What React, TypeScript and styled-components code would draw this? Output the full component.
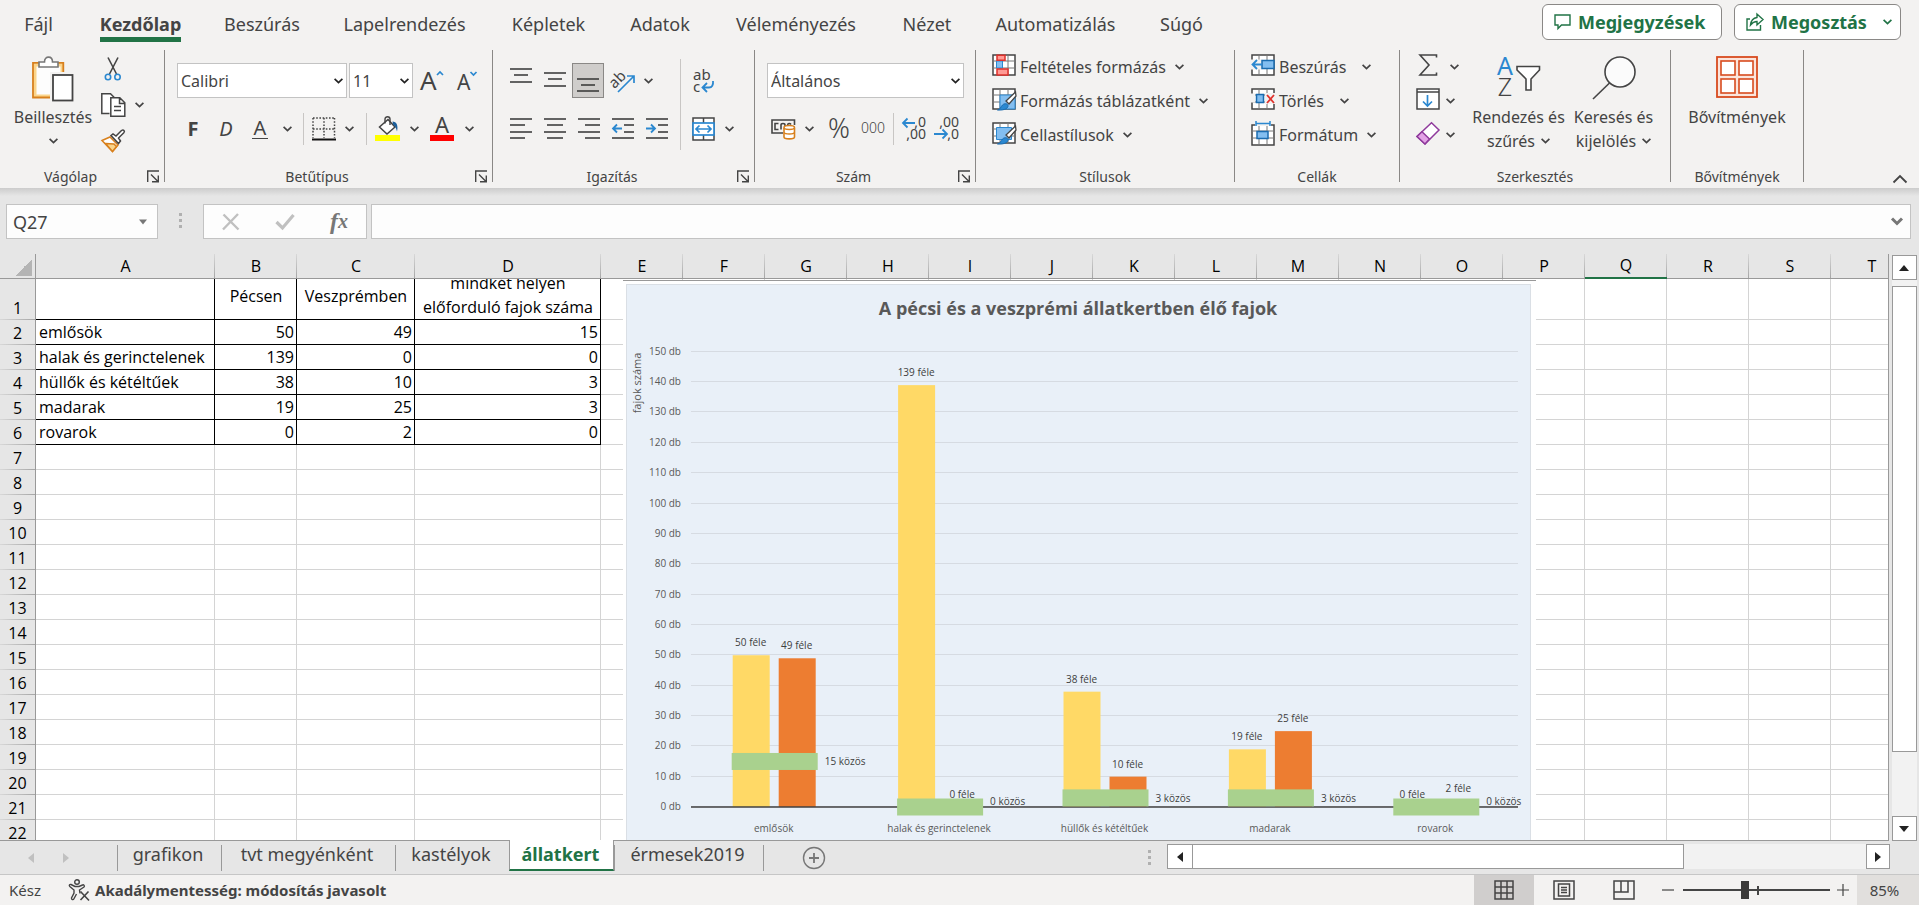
import React from 'react';
import styled, { createGlobalStyle, css } from 'styled-components';

const UI_FONT = "'Noto Sans', 'Open Sans', sans-serif";
const SHEET_FONT = "'Open Sans', 'Noto Sans', sans-serif";
const INK = '#444444';
const GREEN = '#217346';
const BLUE = '#2b88d0';

const GlobalStyle = createGlobalStyle`
  *, *::before, *::after { box-sizing: border-box; }
  body { margin: 0; background: #e6e6e6; font-family: ${UI_FONT}; color: ${INK}; }
  button, input, select { font: inherit; color: inherit; margin: 0; }
  button { border: 0; padding: 0; background: none; cursor: pointer; }
  svg { display: block; flex: none; overflow: visible; }
`;

/* ---------- window ---------- */

const Window = styled.div`
  display: flex;
  flex-direction: column;
  height: 100vh;
  overflow: hidden;
`;

const Ribbon = styled.header`
  background: #f3f2f1;
`;

const TabRow = styled.div`
  display: flex;
  align-items: flex-start;
  height: 50px;
`;

const TabList = styled.nav`
  display: flex;
  flex: 1;
`;

const Tab = styled.button<{ $w: number; $active?: boolean }>`
  width: ${p => p.$w}px;
  padding-top: 12px;
  font-size: 18px;
  line-height: 25px;
  font-weight: ${p => (p.$active ? 700 : 400)};
  white-space: nowrap;
  span {
    display: inline-block;
    border-bottom: 5px solid ${p => (p.$active ? GREEN : 'transparent')};
  }
`;

const ShareArea = styled.div`
  display: flex;
  gap: 12px;
  padding: 4px 18px 0 0;
`;

const ShareButton = styled.button<{ $w: number }>`
  display: flex;
  align-items: center;
  gap: 7px;
  width: ${p => p.$w}px;
  height: 36px;
  padding: 0 8px 0 11px;
  border: 1px solid #8a8886;
  border-radius: 6px;
  background: #ffffff;
  color: ${GREEN};
  font-size: 18px;
  line-height: 24px;
  font-weight: 700;
  span { flex: 1; text-align: left; }
`;

const Groups = styled.div`
  display: flex;
  height: 138px;
`;

const Group = styled.section<{ $w: number }>`
  display: flex;
  flex-direction: column;
  flex: none;
  width: ${p => p.$w}px;
`;

const Divider = styled.div`
  flex: none;
  width: 1px;
  height: 132px;
  background: #8a8886;
`;

const GroupBody = styled.div<{ $pad?: number }>`
  display: flex;
  height: 117px;
  padding-left: ${p => p.$pad ?? 0}px;
`;

const GroupFooter = styled.div`
  display: flex;
  height: 20px;
  font-size: 14px;
  line-height: 20px;
  span { flex: 1; text-align: center; }
`;

const Launcher = styled.button`
  width: 12px;
  height: 18px;
  margin: 0 5px 0 6px;
`;

const CollapseArea = styled.div`
  display: flex;
  flex: 1;
  align-items: flex-end;
  justify-content: flex-end;
  padding: 0 11px 4px 0;
`;

const ControlRows = styled.div`
  display: flex;
  flex-direction: column;
  gap: 11px;
  padding-top: 12px;
`;

const ControlRow = styled.div`
  display: flex;
  align-items: center;
  height: 37px;
`;

const IconButton = styled.button<{ $w: number; $pressed?: boolean }>`
  display: flex;
  flex: none;
  align-items: center;
  justify-content: center;
  width: ${p => p.$w}px;
  height: 35px;
  ${p =>
    p.$pressed &&
    css`
      background: #cfcdcb;
      outline: 1px solid #8a8886;
      outline-offset: -1px;
    `}
`;

const LetterButton = styled(IconButton)<{ $kind: 'bold' | 'italic' | 'underline' }>`
  font-size: 20px;
  line-height: 20px;
  font-weight: ${p => (p.$kind === 'bold' ? 700 : 400)};
  font-style: ${p => (p.$kind === 'italic' ? 'italic' : 'normal')};
  span {
    padding: 0 2px;
    border-bottom: ${p => (p.$kind === 'underline' ? `1px solid ${INK}` : '0')};
  }
`;

const Separator = styled.div<{ $tall?: boolean }>`
  flex: none;
  width: 1px;
  height: ${p => (p.$tall ? 91 : 32)}px;
  margin: ${p => (p.$tall ? '9px 6px 0' : '0 6px')};
  background: #c8c6c4;
`;

const SelectWrap = styled.div<{ $w: number }>`
  position: relative;
  width: ${p => p.$w}px;
  margin-right: 2px;
  svg {
    position: absolute;
    right: 4px;
    top: 15px;
    pointer-events: none;
  }
`;

const SelectBox = styled.select`
  display: block;
  appearance: none;
  width: 100%;
  height: 35px;
  padding: 0 20px 0 3px;
  border: 1px solid #c3c3c3;
  border-radius: 0;
  background: #ffffff;
  font-size: 16px;
`;

const LargeButton = styled.button<{ $w: number }>`
  display: flex;
  flex-direction: column;
  align-items: center;
  width: ${p => p.$w}px;
  height: 117px;
  padding-top: 6px;
  font-size: 16px;
  line-height: 24px;
  white-space: nowrap;
`;

const LargeIcon = styled.span`
  height: 49px;
`;

const LabelLine = styled.span`
  display: flex;
  align-items: center;
  gap: 6px;
  height: 24px;
`;

const Stack = styled.div<{ $w?: number }>`
  display: flex;
  flex-direction: column;
  width: ${p => (p.$w ? `${p.$w}px` : 'auto')};
`;

const CommandRow = styled.div<{ $gap?: number }>`
  display: flex;
  align-items: center;
  gap: ${p => p.$gap ?? 6}px;
  height: 34px;
`;

const Command = styled.button`
  display: flex;
  align-items: center;
  gap: 4px;
  font-size: 16px;
  line-height: 24px;
  white-space: nowrap;
  svg + svg { margin-left: 5px; }
`;

const ClipTools = styled.div`
  display: flex;
  flex-direction: column;
  padding-top: 1px;
`;

const ClipRow = styled.div`
  display: flex;
  align-items: center;
  gap: 9px;
  height: 36px;
`;

/* ---------- formula bar ---------- */

const FormulaBar = styled.div`
  display: flex;
  flex: none;
  align-items: flex-start;
  height: 66px;
  padding: 16px 8px 0 6px;
  background: linear-gradient(#cccccc, #e6e6e6 8px);
`;

const NameBox = styled.div`
  display: flex;
  align-items: center;
  width: 152px;
  height: 35px;
  padding-right: 10px;
  border: 1px solid #c3c3c3;
  background: #fdfdfd;
  input {
    flex: 1;
    min-width: 0;
    padding: 0 6px;
    border: 0;
    outline: 0;
    background: none;
    font-size: 18px;
  }
`;

const Grip = styled.div<{ $w: number }>`
  display: flex;
  flex-direction: column;
  align-items: center;
  justify-content: center;
  gap: 3px;
  width: ${p => p.$w}px;
  height: 33px;
  i {
    width: 3px;
    height: 3px;
    background: #b0b0b0;
  }
`;

const FormulaTools = styled.div`
  display: flex;
  align-items: center;
  width: 164px;
  height: 35px;
  margin-right: 4px;
  border: 1px solid #c3c3c3;
  background: #fdfdfd;
`;

const FxButton = styled(IconButton)`
  font-family: 'Liberation Serif', serif;
  font-size: 24px;
  font-style: italic;
  font-weight: 700;
  color: #777777;
  small { font-size: 20px; }
`;

const FormulaInput = styled.div`
  display: flex;
  flex: 1;
  align-items: center;
  height: 35px;
  padding-right: 7px;
  border: 1px solid #c3c3c3;
  background: #fdfdfd;
  input {
    flex: 1;
    min-width: 0;
    border: 0;
    outline: 0;
    background: none;
    font-size: 18px;
  }
`;

/* ---------- sheet ---------- */

const SheetArea = styled.main`
  display: flex;
  flex: 1;
  min-height: 0;
  background: #e6e6e6;
`;

const GridView = styled.div`
  position: relative;
  flex: 1;
  min-width: 0;
  overflow: hidden;
  background: linear-gradient(#e6e6e6 25px, #ffffff 25px);
  border-right: 1px solid #999999;
  border-bottom: 1px solid #999999;
`;

const GridTable = styled.table`
  width: 1px;
  table-layout: fixed;
  border-collapse: separate;
  border-spacing: 0;
  font-family: ${SHEET_FONT};
  font-size: 16px;
  line-height: 24px;
  color: #000000;
`;

const Col = styled.col<{ $w: number }>`
  width: ${p => p.$w}px;
`;

const ColumnHead = styled.th<{ $selected?: boolean }>`
  height: 25px;
  padding: 0;
  border-bottom: ${p => (p.$selected ? `2px solid ${GREEN}` : '1px solid #999999')};
  background: linear-gradient(#d8d8d8, #a6a6a6) right / 1px 100% no-repeat #e6e6e6;
  font-weight: 400;
  line-height: ${p => (p.$selected ? 23 : 24)}px;
`;

const Corner = styled.th`
  height: 25px;
  padding: 0;
  border-right: 1px solid #999999;
  border-bottom: 1px solid #999999;
  background: linear-gradient(135deg, transparent 50%, #b4b4b4 50%) 15px 5px / 17px 17px no-repeat #e6e6e6;
`;

const RowHead = styled.th`
  padding: 0;
  border-right: 1px solid #999999;
  background: linear-gradient(90deg, #d8d8d8, #a6a6a6) bottom / 100% 1px no-repeat #e6e6e6;
  font-weight: 400;
  vertical-align: bottom;
`;

const Cell = styled.td<{ $data?: boolean; $align?: string }>`
  height: 25px;
  padding: 0 2px 0 3px;
  border-right: 1px solid ${p => (p.$data ? '#000000' : '#d4d4d4')};
  border-bottom: 1px solid ${p => (p.$data ? '#000000' : '#d4d4d4')};
  text-align: ${p => p.$align ?? 'left'};
  white-space: nowrap;
`;

const HeadingText = styled.div<{ $bottom?: boolean }>`
  display: flex;
  align-items: ${p => (p.$bottom ? 'flex-end' : 'center')};
  justify-content: center;
  height: 40px;
  padding-bottom: ${p => (p.$bottom ? 0 : 6)}px;
  overflow: hidden;
`;

const ChartFrame = styled.figure`
  position: absolute;
  left: 623px;
  top: 26px;
  margin: 0;
  background: #ffffff;
  border-top: 1px solid #999999;
`;

const VScroll = styled.div`
  display: flex;
  flex: none;
  flex-direction: column;
  align-items: center;
  width: 30px;
  padding-top: 1px;
`;

const ScrollButton = styled.button<{ $w: number }>`
  display: flex;
  flex: none;
  align-items: center;
  justify-content: center;
  width: ${p => p.$w}px;
  height: 25px;
  border: 1px solid #999999;
  background: #ffffff;
`;

const VTrack = styled.div`
  display: flex;
  flex: 1;
  flex-direction: column;
  width: 25px;
  padding-top: 6px;
  background: #f2f2f2;
`;

const VThumb = styled.div`
  height: 88%;
  border: 1px solid #999999;
  background: #ffffff;
`;

/* ---------- sheet tabs ---------- */

const SheetTabs = styled.div`
  display: flex;
  flex: none;
  height: 33px;
  background: #e6e6e6;
`;

const TabStrip = styled.div`
  display: flex;
  flex: 1;
  margin-right: 2px;
`;

const NavArrows = styled.div`
  display: flex;
  align-items: center;
  justify-content: space-between;
  width: 117px;
  padding: 0 46px 0 26px;
`;

const SheetTab = styled.button<{ $w: number; $active?: boolean }>`
  position: relative;
  width: ${p => p.$w}px;
  height: 30px;
  padding: 0 2px 4px 0;
  font-size: 18px;
  line-height: 26px;
  white-space: nowrap;
  &::before {
    content: '';
    position: absolute;
    left: 0;
    top: 4px;
    height: 26px;
    border-left: 1px solid #999999;
  }
  ${p =>
    p.$active &&
    css`
      height: 31px;
      margin-top: -1px;
      border-right: 1px solid #999999;
      border-left: 1px solid #999999;
      border-bottom: 2px solid ${GREEN};
      padding-bottom: 2px;
      background: #ffffff;
      color: ${GREEN};
      font-weight: 700;
      &::before { display: none; }
    `}
`;

const TabEnd = styled.div`
  width: 1px;
  height: 26px;
  margin-top: 4px;
  background: #999999;
`;

const AddSheet = styled.button`
  display: flex;
  align-items: center;
  justify-content: center;
  width: 100px;
`;

const HScroll = styled.div`
  display: flex;
  width: 723px;
  padding-top: 3px;
`;

const HTrack = styled.div`
  flex: 1;
  height: 25px;
  background: #f2f2f2;
`;

const HThumb = styled.div`
  width: 73%;
  height: 25px;
  border: 1px solid #999999;
  border-left: 0;
  background: #ffffff;
`;

const ScrollEnd = styled.div`
  width: 29px;
`;

/* ---------- status bar ---------- */

const StatusBar = styled.footer`
  display: flex;
  flex: none;
  align-items: center;
  height: 31px;
  border-top: 1px solid #c6c6c6;
  background: #f3f2f1;
  font-size: 15px;
`;

const StatusText = styled.span`
  width: 59px;
  padding-left: 9px;
`;

const AccessibilityStatus = styled.button`
  display: flex;
  flex: 1;
  align-items: center;
  gap: 5px;
  padding-left: 9px;
  font-weight: 700;
`;

const ViewButton = styled.button<{ $active?: boolean }>`
  display: flex;
  align-items: center;
  justify-content: center;
  width: 60px;
  height: 30px;
  background: ${p => (p.$active ? '#d0cecd' : 'transparent')};
`;

const ZoomArea = styled.div`
  display: flex;
  align-items: center;
  width: 203px;
  padding-left: 8px;
`;

const ZoomTrack = styled.div`
  position: relative;
  width: 147px;
  margin: 0 7px 0 9px;
  &::after {
    content: '';
    position: absolute;
    left: 50%;
    top: 5px;
    width: 2px;
    height: 9px;
    background: ${INK};
  }
`;

const ZoomRange = styled.input`
  display: block;
  appearance: none;
  width: 100%;
  height: 19px;
  background: linear-gradient(${INK}, ${INK}) center / 100% 2px no-repeat;
  &::-webkit-slider-thumb {
    appearance: none;
    width: 8px;
    height: 18px;
    background: #3b3a39;
  }
`;

const ZoomValue = styled.button`
  width: 62px;
  height: 30px;
  padding-right: 7px;
  background: #e1dfdd;
`;

/* ---------- icons ---------- */

const Chevron = ({ color = INK }: { color?: string }) => (
  <svg width="9" height="6" viewBox="0 0 9 6" fill="none" stroke={color} strokeWidth="1.7">
    <path d="M.6.8 4.5 4.6 8.4.8" />
  </svg>
);

const LauncherIcon = () => (
  <svg width="12" height="13" viewBox="0 0 12 13" fill="none" stroke={INK} strokeWidth="1.4">
    <path d="M.7 12V1H12M4 4.5l7 7M11.3 5.5v6.3H5" />
  </svg>
);

const PasteIcon = () => (
  <svg width="42" height="46" viewBox="0 0 42 46" fill="none">
    <rect x="3" y="9" width="27" height="31" fill="#fdfdfd" stroke="#fbd58b" strokeWidth="3" />
    <path d="M31.3 17V6.8H1V41.5H20" stroke="#d8801d" strokeWidth="1.8" />
    <path d="M7 11V6h5.5c0-6.5 8-6.5 8 0H26v5z" fill="#fff" stroke="#777" strokeWidth="1.6" />
    <rect x="18" y="16" width="24" height="30" fill="#f3f2f1" />
    <rect x="21" y="19" width="19.5" height="25.5" fill="#fff" stroke={INK} strokeWidth="1.8" />
  </svg>
);

const CutIcon = () => (
  <svg width="24" height="24" viewBox="0 0 24 24" fill="none" strokeWidth="1.6">
    <path d="M7 .5 15.5 17M17 .5 8.5 17" stroke={INK} />
    <circle cx="7" cy="20" r="2.7" stroke={BLUE} />
    <circle cx="16.5" cy="20" r="2.7" stroke={BLUE} />
  </svg>
);

const CopyIcon = () => (
  <svg width="25" height="24" viewBox="0 0 25 24" fill="#fff" stroke={INK} strokeWidth="1.5">
    <path d="M8.5 20.5H.8V.8h8.7l4 4" />
    <path d="M9.8 4.8h9l5 5v13.4h-14zM18.5 5v5.5H24M13 13.5h7M13 17.5h7" />
  </svg>
);

const BrushIcon = () => (
  <svg width="24" height="24" viewBox="0 0 24 24" fill="none" strokeWidth="1.5">
    <path d="M1 11.5 9 8l8 8-5.5 6.5z" fill="#fff" stroke="#d8801d" />
    <path d="M4.5 14.5 13 15l2.5 2.5-4 5z" fill="#fbd58b" stroke="#d8801d" />
    <path d="m10 6.5 2-1.5 3 2 5.5-5.5c2-1.5 3.8.5 2.3 2.3L17.500 9l2 3-2 2.500z" fill="#fff" stroke={INK} />
  </svg>
);

const FontSizeIcon = ({ grow }: { grow?: boolean }) => (
  <svg width="26" height="26" viewBox="0 0 26 26">
    <text x={grow ? 1 : 4} y="22" fontFamily={UI_FONT} fontSize={grow ? 26 : 21} fill={INK}>A</text>
    <path d={grow ? 'M18 7 21 4l3 3' : 'M17.5 4 20.5 7l3-3'} fill="none" stroke={BLUE} strokeWidth="1.7" />
  </svg>
);

const BorderIcon = () => (
  <svg width="24" height="24" viewBox="0 0 24 24" fill="none" stroke={INK} strokeWidth="1.5">
    <path d="M1 1h22M1 12h22M1 1v20M12 1v20M22.5 1v20" strokeDasharray="1.6 1.6" />
    <path d="M0 22.5h24" stroke="#111" strokeWidth="2" />
  </svg>
);

const FillIcon = () => (
  <svg width="25" height="26" viewBox="0 0 25 26" fill="none">
    <path d="M13 3.5 20 11l-8 7-7.5-7z" fill="#fff" stroke={INK} strokeWidth="1.5" />
    <path d="M10 7.5V3c0-3 5-3 5 0v6" stroke={INK} strokeWidth="1.4" />
    <path d="M17.5 5.5c4 0 6 4 4.5 10-1-4-2-5.5-4-7z" fill="#1b5f9c" />
    <rect y="19" width="25" height="6" fill="#ffff00" />
  </svg>
);

const FontColorIcon = () => (
  <svg width="24" height="26" viewBox="0 0 24 26">
    <text x="12" y="17" textAnchor="middle" fontFamily={UI_FONT} fontSize="22" fill={INK}>A</text>
    <rect y="19" width="24" height="6" fill="#ff0000" />
  </svg>
);

const LinesIcon = ({ lines, h = 22 }: { lines: [number, number, number][]; h?: number }) => (
  <svg width="22" height={h} viewBox={`0 0 22 ${h}`} stroke="#333" strokeWidth="1.5">
    {lines.map(([x1, x2, y]) => (
      <path key={y} d={`M${x1} ${y}H${x2}`} />
    ))}
  </svg>
);

const IndentIcon = ({ outdent }: { outdent?: boolean }) => (
  <svg width="22" height="22" viewBox="0 0 22 22" fill="none" stroke="#333" strokeWidth="1.5">
    <path d="M0 1h22M12 7h10M12 14h10M0 20h22" />
    <path
      d={outdent ? 'M10 10.5H1M5 6.5l-4 4 4 4' : 'M0 10.5h9M5 6.5l4 4-4 4'}
      stroke={BLUE}
      strokeWidth="1.8"
    />
  </svg>
);

const OrientationIcon = () => (
  <svg width="26" height="26" viewBox="0 0 26 26">
    <text x="2" y="19" transform="rotate(-45 6 17)" fontFamily={UI_FONT} fontSize="15" fill={INK}>ab</text>
    <path d="M8 24 24 8M17 8h7v7" fill="none" stroke={BLUE} strokeWidth="1.7" />
  </svg>
);

const WrapIcon = () => (
  <svg width="22" height="26" viewBox="0 0 22 26">
    <text x="0" y="12" fontFamily={UI_FONT} fontSize="15" fill={INK}>ab</text>
    <text x="0" y="24" fontFamily={UI_FONT} fontSize="15" fill={INK}>c</text>
    <path d="M20 13c.5 4-1 6.5-4 6.5H9.5M14 15l-4.5 4.5L14 24" fill="none" stroke={BLUE} strokeWidth="1.8" />
  </svg>
);

const MergeIcon = () => (
  <svg width="23" height="24" viewBox="0 0 23 24" fill="none">
    <path d="M1 1h21v22H1zM11.5 1v22" fill="#fff" stroke={INK} strokeWidth="1.5" />
    <rect x="1" y="6" width="21" height="12" fill="#fff" stroke={BLUE} strokeWidth="1.7" />
    <path d="M4 12h15M7.5 8.5 4 12l3.5 3.5M15.5 8.5 19 12l-3.5 3.5" stroke={BLUE} strokeWidth="1.7" />
  </svg>
);

const CurrencyIcon = () => (
  <svg width="25" height="22" viewBox="0 0 25 22" fill="none">
    <path d="M12 15H1V2h22.5v5" stroke={INK} strokeWidth="1.6" />
    <path d="M7.5 5.5H4v6h3.5M14 8V7c0-2-4-2-4 0v4.5M20 6.5c-1-1.5-3-1.5-3.5.5" stroke={INK} strokeWidth="1.6" />
    <path d="M13 10v9c0 2.5 10.5 2.5 10.5 0v-9" fill="#fff" stroke="#d8801d" strokeWidth="1.6" />
    <ellipse cx="18.25" cy="9.5" rx="5.25" ry="2" fill="#fff" stroke="#d8801d" strokeWidth="1.6" />
    <path d="M13 14.5c1 2 9.5 2 10.5 0" stroke="#d8801d" strokeWidth="1.6" />
  </svg>
);

const PercentIcon = () => (
  <svg width="26" height="26" viewBox="0 0 26 26">
    <text x="13" y="22" textAnchor="middle" fontFamily={UI_FONT} fontSize="27" fontWeight="300" fill={INK}>%</text>
  </svg>
);

const ThousandsIcon = () => (
  <svg width="28" height="22" viewBox="0 0 28 22">
    <text x="14" y="15" textAnchor="middle" fontFamily={UI_FONT} fontSize="14" fontWeight="300" fill={INK}>000</text>
  </svg>
);

const DecimalIcon = ({ more }: { more?: boolean }) => (
  <svg width="26" height="26" viewBox="0 0 26 26" fontFamily={UI_FONT} fontSize="14" fill={INK}>
    <text x="25" y="11" textAnchor="end">{more ? ',0' : ',00'}</text>
    <text x="25" y="23" textAnchor="end">{more ? ',00' : ',0'}</text>
    <path
      d={more ? 'M14 7H2M6.5 2.5 2 7 6.5 11.5' : 'M0 18h13M8.5 13.5 13 18l-4.5 4.5'}
      fill="none"
      stroke={BLUE}
      strokeWidth="1.8"
    />
  </svg>
);

const Grid = () => (
  <>
    <rect x="1" y="1" width="22" height="20" fill="#fff" stroke={INK} strokeWidth="1.5" />
    <path d="M8 1v20M16 1v20M1 7h22M1 14h22" stroke="#777" strokeWidth="1" />
  </>
);

const ConditionalIcon = () => (
  <svg width="24" height="26" viewBox="0 0 24 26" fill="none">
    <Grid />
    <path d="M4.5 7h6v7h-6z" fill="#83bef0" stroke={BLUE} />
    <path d="M5 1.2h8v5H5zM5 15h11v6H5z" fill="#ff9a94" stroke="#e0322c" strokeWidth="1.5" />
  </svg>
);

const PaintBrush = () => (
  <>
    <path d="M23.5 4 14 13l3 3 7-8z" fill="#fff" stroke={INK} strokeWidth="1.3" />
    <path d="M5.5 22c3-.5 3-3 5-5s5-1.5 5.5.5c.5 2.5-3 5-10.5 4.5z" fill="#2b88d0" stroke="#1b6cb0" />
  </>
);

const TableFormatIcon = () => (
  <svg width="24" height="26" viewBox="0 0 24 26" fill="none">
    <Grid />
    <path d="M8 7h15v14H8z" fill="#83bef0" stroke={BLUE} />
    <PaintBrush />
  </svg>
);

const CellStyleIcon = () => (
  <svg width="24" height="26" viewBox="0 0 24 26" fill="none">
    <Grid />
    <path d="M4.5 5.5h15v12h-15z" fill="#83bef0" stroke={BLUE} />
    <PaintBrush />
  </svg>
);

const InsertIcon = () => (
  <svg width="24" height="26" viewBox="0 0 24 26" fill="none">
    <Grid />
    <path d="M0 5.5h12v10H0z" fill="#f3f2f1" />
    <path d="M11 6.5h12v8H11z" fill="#83bef0" stroke="#1b6cb0" strokeWidth="1.5" />
    <path d="M11 10.5H1.5M6 6l-4.5 4.5L6 15" stroke={BLUE} strokeWidth="1.8" />
  </svg>
);

const DeleteIcon = () => (
  <svg width="24" height="26" viewBox="0 0 24 26" fill="none">
    <Grid />
    <path d="M14 5h10v11H14zM0 5.5h4v9H0z" fill="#f3f2f1" />
    <path d="M5.5 6.5h7v8h-7z" fill="#83bef0" stroke="#1b6cb0" strokeWidth="1.5" />
    <path d="m16 7 7 8M23 7l-7 8" stroke="#e0322c" strokeWidth="1.8" />
  </svg>
);

const FormatIcon = () => (
  <svg width="24" height="28" viewBox="0 0 24 28" fill="none">
    <g transform="translate(0 3)">
      <Grid />
      <path d="M6 7.5h11v7H6z" fill="#83bef0" stroke="#1b6cb0" strokeWidth="1.5" />
    </g>
    <path d="M4 0h16v5H4z" fill="#f3f2f1" />
    <path d="M5 2.5h14M5 0v5M19 0v5" stroke={BLUE} strokeWidth="1.5" />
  </svg>
);

const SumIcon = () => (
  <svg width="24" height="26" viewBox="0 0 24 26" fill="none" stroke={INK} strokeWidth="1.6">
    <path d="M20.5 3.5V1H4l9 10-9 10h16.5v-2.5" />
  </svg>
);

const FillDownIcon = () => (
  <svg width="24" height="26" viewBox="0 0 24 26" fill="none">
    <path d="M1 1h22v20H1z" fill="#fff" stroke={INK} strokeWidth="1.5" />
    <path d="M1 4h22" stroke={INK} strokeWidth="1.5" />
    <path d="M11.5 7v11M7 13.5l4.5 4.5 4.5-4.5" stroke={BLUE} strokeWidth="1.7" />
  </svg>
);

const EraserIcon = () => (
  <svg width="24" height="26" viewBox="0 0 24 26" fill="none" stroke="#8f3a9c" strokeWidth="1.5">
    <path d="M15.5.8 23 8 9 22 1 14.5z" fill="#fff" />
    <path d="M6 9.8 13.5 17 9 22 1 14.5z" fill="#e3a3e6" />
  </svg>
);

const SortIcon = () => (
  <svg width="44" height="42" viewBox="0 0 44 42" fontFamily={UI_FONT} fontSize="25">
    <text x="8" y="19" textAnchor="middle" fill={BLUE}>A</text>
    <text x="8" y="40" textAnchor="middle" fontWeight="300" fill={INK}>Z</text>
    <path d="M20 10.5h22.5V14L34 23v11h-5V23l-9-9z" fill="#fff" stroke={INK} strokeWidth="1.6" />
  </svg>
);

const FindIcon = () => (
  <svg width="44" height="44" viewBox="0 0 44 44" fill="none" stroke={INK} strokeWidth="1.6">
    <circle cx="28" cy="16" r="15" fill="#fbfbfb" />
    <path d="M17.5 27 1 43" />
  </svg>
);

const AddinsIcon = () => (
  <svg width="42" height="42" viewBox="0 0 42 42" fill="#fff">
    <rect x="1" y="1" width="40" height="40" fill="#fbe5dc" stroke="#d84b1f" strokeWidth="1.8" />
    {[5, 23].map(x =>
      [5, 23].map(y => (
        <rect key={`${x}${y}`} x={x} y={y} width="14" height="14" stroke="#d84b1f" strokeWidth="1.6" />
      )),
    )}
  </svg>
);

const CommentIcon = () => (
  <svg width="17" height="18" viewBox="0 0 17 18" fill="none" stroke={GREEN} strokeWidth="1.4">
    <path d="M1 2h15v10H7.5L4 15.5V12H1z" />
  </svg>
);

const ShareIcon = () => (
  <svg width="18" height="20" viewBox="0 0 18 20" fill="none" stroke={GREEN} strokeWidth="1.4">
    <path d="M4 7H1v11h13.5v-5" />
    <path d="M11 2v3.5C7 6 5 8.5 4.5 13 6.5 10.5 8 9.5 11 9.5V13l6-5.5z" />
  </svg>
);

const CollapseIcon = () => (
  <svg width="16" height="10" viewBox="0 0 16 10" fill="none" stroke={INK} strokeWidth="1.8">
    <path d="m1.5 8.5 6.5-6.5 6.5 6.5" />
  </svg>
);

const TRIANGLES = {
  up: 'M0 8 5 2l5 6z',
  down: 'M0 2l5 6 5-6z',
  left: 'M8 0 2 5l6 5z',
  right: 'M2 0l6 5-6 5z',
};

const Triangle = ({ dir, color = '#222', size = 10 }: { dir: keyof typeof TRIANGLES; color?: string; size?: number }) => (
  <svg width={size} height={size} viewBox="0 0 10 10" fill={color}>
    <path d={TRIANGLES[dir]} />
  </svg>
);

const AccessibilityIcon = () => (
  <svg width="22" height="22" viewBox="0 0 22 22" fill="none" stroke={INK} strokeWidth="1.4">
    <circle cx="9" cy="3" r="2.3" />
    <path d="M12 14.5 11.5 11l4.5-3c1-1-.3-2.6-1.5-2L11 7.500H7L3 5.500c-1.300-.5-2.300 1-1.200 2L6 11v3l-2.500 5c-.3 1.500 1.700 2.200 2.300 1l2.700-5" />
    <path d="m12.5 12.5 8.500 9M20.500 12.500l-8 8.500" strokeWidth="1.6" />
  </svg>
);

/* ---------- data ---------- */

const RIBBON_TABS: [string, number][] = [
  ['Fájl', 77],
  ['Kezdőlap', 127],
  ['Beszúrás', 116],
  ['Lapelrendezés', 169],
  ['Képletek', 119],
  ['Adatok', 104],
  ['Véleményezés', 168],
  ['Nézet', 94],
  ['Automatizálás', 163],
  ['Súgó', 89],
];

const COLUMNS: [string, number][] = [
  ['A', 179], ['B', 82], ['C', 118], ['D', 186],
  ...'EFGHIJKLMNOPQRST'.split('').map(letter => [letter, 82] as [string, number]),
];

const SPECIES = [
  { name: 'emlősök', pecs: 50, veszprem: 49, both: 15 },
  { name: 'halak és gerinctelenek', pecs: 139, veszprem: 0, both: 0 },
  { name: 'hüllők és kétéltűek', pecs: 38, veszprem: 10, both: 3 },
  { name: 'madarak', pecs: 19, veszprem: 25, both: 3 },
  { name: 'rovarok', pecs: 0, veszprem: 2, both: 0 },
];

const SHEETS: [string, number][] = [
  ['grafikon', 104],
  ['tvt megyénként', 174],
  ['kastélyok', 114],
  ['állatkert', 105],
  ['érmesek2019', 149],
];

/* ---------- chart ---------- */

const CHART = { left: 68, right: 895, zero: 526, step: 30.35, bar: 37 };

const Chart = () => {
  const category = (CHART.right - CHART.left) / SPECIES.length;
  const yOf = (v: number) => CHART.zero - (v / 10) * CHART.step;
  const ticks = Array.from({ length: 16 }, (_, i) => i * 10);
  return (
    <ChartFrame>
      <svg width="913" height="580" viewBox="0 0 913 580" fontFamily={SHEET_FONT} fontSize="10" fill="#404040">
        <rect x="3.5" y="3.5" width="904" height="590" fill="#e9f0f8" stroke="#dadfe5" />
        <text x="455" y="34" textAnchor="middle" fontSize="18" fontWeight="700" fill="#595959">
          A pécsi és a veszprémi állatkertben élő fajok
        </text>
        <text transform="translate(18 102) rotate(-90)" textAnchor="middle" fontSize="11" fill="#595959">
          fajok száma
        </text>
        {ticks.map(v => (
          <g key={v}>
            <path d={`M${CHART.left} ${Math.round(yOf(v)) - 0.5}H${CHART.right}`} stroke="#d6dbe2" />
            <text x="58" y={yOf(v) + 3} textAnchor="end" fill="#595959">{v} db</text>
          </g>
        ))}
        {SPECIES.map((s, i) => {
          const mid = CHART.left + category * (i + 0.5);
          return (
            <g key={s.name}>
              <rect x={mid - 41} y={yOf(s.pecs)} width={CHART.bar} height={CHART.zero - yOf(s.pecs)} fill="#ffd966" />
              <rect x={mid + 5} y={yOf(s.veszprem)} width={CHART.bar} height={CHART.zero - yOf(s.veszprem)} fill="#ed7d31" />
            </g>
          );
        })}
        <path d={`M${CHART.left} ${CHART.zero}H${CHART.right}`} stroke="#404040" strokeWidth="1.5" />
        {SPECIES.map((s, i) => {
          const mid = CHART.left + category * (i + 0.5);
          return (
            <g key={s.name} textAnchor="middle">
              <rect x={mid - 42} y={yOf(s.both) - 8.5} width="86" height="17" fill="#a9d18e" />
              <text x={mid - 23} y={yOf(s.pecs) - 9}>{s.pecs} féle</text>
              <text x={mid + 23} y={yOf(s.veszprem) - 9}>{s.veszprem} féle</text>
              <text x={mid + 51} y={yOf(s.both) + (s.both ? 4 : -2)} textAnchor="start">{s.both} közös</text>
              <text x={mid} y="551" fill="#595959">{s.name}</text>
            </g>
          );
        })}
      </svg>
    </ChartFrame>
  );
};

/* ---------- sections ---------- */

const Footer = ({ label, launcher }: { label: string; launcher?: boolean }) => (
  <GroupFooter>
    <span>{label}</span>
    {launcher && (
      <Launcher aria-label={`${label} beállításai`}>
        <LauncherIcon />
      </Launcher>
    )}
  </GroupFooter>
);

const Drop = ({ w, label }: { w: number; label: string }) => (
  <IconButton $w={w} aria-label={label}>
    <Chevron />
  </IconButton>
);

const Picker = ({ w, label, value }: { w: number; label: string; value: string }) => (
  <SelectWrap $w={w}>
    <SelectBox aria-label={label} defaultValue={value}>
      <option>{value}</option>
    </SelectBox>
    <Chevron color="#222" />
  </SelectWrap>
);

const RibbonGroups = () => (
  <Groups>
    <Group $w={164}>
      <GroupBody $pad={5}>
        <LargeButton $w={96}>
          <LargeIcon><PasteIcon /></LargeIcon>
          <LabelLine>Beillesztés</LabelLine>
          <LabelLine><Chevron /></LabelLine>
        </LargeButton>
        <ClipTools>
          <ClipRow><button aria-label="Kivágás"><CutIcon /></button></ClipRow>
          <ClipRow>
            <button aria-label="Másolás"><CopyIcon /></button>
            <button aria-label="Másolási lehetőségek"><Chevron /></button>
          </ClipRow>
          <ClipRow><button aria-label="Formátummásoló"><BrushIcon /></button></ClipRow>
        </ClipTools>
      </GroupBody>
      <Footer label="Vágólap" launcher />
    </Group>
    <Divider />
    <Group $w={327}>
      <GroupBody $pad={12}>
        <ControlRows>
          <ControlRow>
            <Picker w={170} label="Betűtípus" value="Calibri" />
            <Picker w={64} label="Betűméret" value="11" />
            <IconButton $w={34} aria-label="Betűméret növelése"><FontSizeIcon grow /></IconButton>
            <IconButton $w={34} aria-label="Betűméret csökkentése"><FontSizeIcon /></IconButton>
          </ControlRow>
          <ControlRow>
            <LetterButton $w={32} $kind="bold"><span>F</span></LetterButton>
            <LetterButton $w={34} $kind="italic"><span>D</span></LetterButton>
            <LetterButton $w={34} $kind="underline"><span>A</span></LetterButton>
            <Drop w={20} label="Aláhúzás típusa" />
            <Separator />
            <IconButton $w={28} aria-label="Szegélyek"><BorderIcon /></IconButton>
            <Drop w={22} label="Szegély típusa" />
            <Separator />
            <IconButton $w={28} aria-label="Kitöltőszín"><FillIcon /></IconButton>
            <Drop w={26} label="Kitöltőszín választása" />
            <IconButton $w={30} aria-label="Betűszín"><FontColorIcon /></IconButton>
            <Drop w={24} label="Betűszín választása" />
          </ControlRow>
        </ControlRows>
      </GroupBody>
      <Footer label="Betűtípus" launcher />
    </Group>
    <Divider />
    <Group $w={261}>
      <GroupBody $pad={11}>
        <ControlRows>
          <ControlRow>
            <IconButton $w={34} aria-label="Felülre igazítás">
              <LinesIcon h={26} lines={[[0, 22, 1], [4, 18, 7], [0, 22, 14]]} />
            </IconButton>
            <IconButton $w={34} aria-label="Középre igazítás függőlegesen">
              <LinesIcon lines={[[0, 22, 3], [4, 18, 9], [0, 22, 16]]} />
            </IconButton>
            <IconButton $w={32} $pressed aria-label="Alulra igazítás">
              <LinesIcon lines={[[0, 22, 9], [4, 18, 15], [0, 22, 21]]} />
            </IconButton>
            <IconButton $w={38} aria-label="Tájolás"><OrientationIcon /></IconButton>
            <Drop w={12} label="Tájolás választása" />
          </ControlRow>
          <ControlRow>
            <IconButton $w={34} aria-label="Balra igazítás">
              <LinesIcon lines={[[0, 22, 1], [0, 15, 7], [0, 22, 14], [0, 15, 20]]} />
            </IconButton>
            <IconButton $w={34} aria-label="Középre igazítás">
              <LinesIcon lines={[[0, 22, 1], [3, 19, 7], [0, 22, 14], [3, 19, 20]]} />
            </IconButton>
            <IconButton $w={34} aria-label="Jobbra igazítás">
              <LinesIcon lines={[[0, 22, 1], [7, 22, 7], [0, 22, 14], [7, 22, 20]]} />
            </IconButton>
            <IconButton $w={34} aria-label="Behúzás csökkentése"><IndentIcon outdent /></IconButton>
            <IconButton $w={34} aria-label="Behúzás növelése"><IndentIcon /></IconButton>
          </ControlRow>
        </ControlRows>
        <Separator $tall />
        <ControlRows>
          <ControlRow>
            <IconButton $w={34} aria-label="Sortöréssel több sorba"><WrapIcon /></IconButton>
          </ControlRow>
          <ControlRow>
            <IconButton $w={32} aria-label="Cellaegyesítés"><MergeIcon /></IconButton>
            <Drop w={20} label="Cellaegyesítés típusa" />
          </ControlRow>
        </ControlRows>
      </GroupBody>
      <Footer label="Igazítás" launcher />
    </Group>
    <Divider />
    <Group $w={220}>
      <GroupBody $pad={12}>
        <ControlRows>
          <ControlRow>
            <Picker w={197} label="Számformátum" value="Általános" />
          </ControlRow>
          <ControlRow>
            <IconButton $w={32} aria-label="Könyvelési számformátum"><CurrencyIcon /></IconButton>
            <Drop w={20} label="Pénznem választása" />
            <IconButton $w={40} aria-label="Százalék stílus"><PercentIcon /></IconButton>
            <IconButton $w={28} aria-label="Ezres csoport"><ThousandsIcon /></IconButton>
            <Separator />
            <IconButton $w={28} aria-label="Tizedeshelyek növelése"><DecimalIcon more /></IconButton>
            <IconButton $w={38} aria-label="Tizedeshelyek csökkentése"><DecimalIcon /></IconButton>
          </ControlRow>
        </ControlRows>
      </GroupBody>
      <Footer label="Szám" launcher />
    </Group>
    <Divider />
    <Group $w={258}>
      <GroupBody $pad={16}>
        <Stack>
          <CommandRow><Command><ConditionalIcon />Feltételes formázás <Chevron /></Command></CommandRow>
          <CommandRow><Command><TableFormatIcon />Formázás táblázatként <Chevron /></Command></CommandRow>
          <CommandRow><Command><CellStyleIcon />Cellastílusok <Chevron /></Command></CommandRow>
        </Stack>
      </GroupBody>
      <Footer label="Stílusok" />
    </Group>
    <Divider />
    <Group $w={164}>
      <GroupBody $pad={16}>
        <Stack>
          <CommandRow $gap={16}>
            <Command><InsertIcon />Beszúrás</Command>
            <button aria-label="Beszúrás típusa"><Chevron /></button>
          </CommandRow>
          <CommandRow $gap={16}>
            <Command><DeleteIcon />Törlés</Command>
            <button aria-label="Törlés típusa"><Chevron /></button>
          </CommandRow>
          <CommandRow><Command><FormatIcon />Formátum <Chevron /></Command></CommandRow>
        </Stack>
      </GroupBody>
      <Footer label="Cellák" />
    </Group>
    <Divider />
    <Group $w={270}>
      <GroupBody $pad={16}>
        <Stack $w={52}>
          <CommandRow $gap={10}>
            <button aria-label="Szumma"><SumIcon /></button>
            <button aria-label="Függvény választása"><Chevron /></button>
          </CommandRow>
          <CommandRow>
            <button aria-label="Kitöltés"><FillDownIcon /></button>
            <button aria-label="Kitöltés iránya"><Chevron /></button>
          </CommandRow>
          <CommandRow>
            <button aria-label="Törlés"><EraserIcon /></button>
            <button aria-label="Törlés módja"><Chevron /></button>
          </CommandRow>
        </Stack>
        <LargeButton $w={101}>
          <LargeIcon><SortIcon /></LargeIcon>
          <LabelLine>Rendezés és</LabelLine>
          <LabelLine>szűrés <Chevron /></LabelLine>
        </LargeButton>
        <LargeButton $w={89}>
          <LargeIcon><FindIcon /></LargeIcon>
          <LabelLine>Keresés és</LabelLine>
          <LabelLine>kijelölés <Chevron /></LabelLine>
        </LargeButton>
      </GroupBody>
      <Footer label="Szerkesztés" />
    </Group>
    <Divider />
    <Group $w={132}>
      <GroupBody>
        <LargeButton $w={132}>
          <LargeIcon><AddinsIcon /></LargeIcon>
          <LabelLine>Bővítmények</LabelLine>
        </LargeButton>
      </GroupBody>
      <Footer label="Bővítmények" />
    </Group>
    <Divider />
    <CollapseArea>
      <button aria-label="Menüszalag összecsukása"><CollapseIcon /></button>
    </CollapseArea>
  </Groups>
);

const Spreadsheet = () => (
  <GridView>
    <GridTable>
      <colgroup>
        <Col $w={36} />
        {COLUMNS.map(([name, w]) => <Col key={name} $w={w} />)}
      </colgroup>
      <thead>
        <tr>
          <Corner aria-label="Az összes kijelölése" />
          {COLUMNS.map(([name]) => (
            <ColumnHead key={name} scope="col" $selected={name === 'Q'}>{name}</ColumnHead>
          ))}
        </tr>
      </thead>
      <tbody>
        <tr>
          <RowHead scope="row">1</RowHead>
          <Cell $data />
          <Cell $data><HeadingText>Pécsen</HeadingText></Cell>
          <Cell $data><HeadingText>Veszprémben</HeadingText></Cell>
          <Cell $data $align="center">
            <HeadingText $bottom><span>mindkét helyen<br />előforduló fajok száma</span></HeadingText>
          </Cell>
          {COLUMNS.slice(4).map(([name]) => <Cell key={name} />)}
        </tr>
        {SPECIES.map((s, i) => (
          <tr key={s.name}>
            <RowHead scope="row">{i + 2}</RowHead>
            <Cell $data>{s.name}</Cell>
            <Cell $data $align="right">{s.pecs}</Cell>
            <Cell $data $align="right">{s.veszprem}</Cell>
            <Cell $data $align="right">{s.both}</Cell>
            {COLUMNS.slice(4).map(([name]) => <Cell key={name} />)}
          </tr>
        ))}
        {Array.from({ length: 16 }, (_, i) => (
          <tr key={i}>
            <RowHead scope="row">{i + 7}</RowHead>
            {COLUMNS.map(([name]) => <Cell key={name} />)}
          </tr>
        ))}
      </tbody>
    </GridTable>
    <Chart />
  </GridView>
);

export default function App() {
  return (
    <Window>
      <GlobalStyle />
      <Ribbon>
        <TabRow>
          <TabList>
            {RIBBON_TABS.map(([name, w]) => (
              <Tab key={name} $w={w} $active={name === 'Kezdőlap'}><span>{name}</span></Tab>
            ))}
          </TabList>
          <ShareArea>
            <ShareButton $w={180}><CommentIcon /><span>Megjegyzések</span></ShareButton>
            <ShareButton $w={167}><ShareIcon /><span>Megosztás</span><Chevron color={GREEN} /></ShareButton>
          </ShareArea>
        </TabRow>
        <RibbonGroups />
      </Ribbon>

      <FormulaBar>
        <NameBox>
          <input aria-label="Név mező" defaultValue="Q27" />
          <Triangle dir="down" color="#777" size={8} />
        </NameBox>
        <Grip $w={45}><i /><i /><i /></Grip>
        <FormulaTools>
          <IconButton $w={54} aria-label="Mégse">
            <svg width="18" height="18" viewBox="0 0 18 18" stroke="#c0c0c0" strokeWidth="2.4">
              <path d="m1.5 1.5 15 15M16 1 1 16.5" />
            </svg>
          </IconButton>
          <IconButton $w={54} aria-label="Beírás">
            <svg width="20" height="18" viewBox="0 0 20 18" fill="none" stroke="#c0c0c0" strokeWidth="3.2">
              <path d="m1.5 9 6 6L18.5 2" />
            </svg>
          </IconButton>
          <FxButton $w={54} aria-label="Függvény beszúrása">f<small>x</small></FxButton>
        </FormulaTools>
        <FormulaInput>
          <input aria-label="Szerkesztőléc" />
          <svg width="12" height="9" viewBox="0 0 12 9" fill="none" stroke="#777" strokeWidth="3">
            <path d="m1 1.5 5 5 5-5" />
          </svg>
        </FormulaInput>
      </FormulaBar>

      <SheetArea>
        <Spreadsheet />
        <VScroll>
          <ScrollButton $w={25} aria-label="Fel"><Triangle dir="up" /></ScrollButton>
          <VTrack><VThumb /></VTrack>
          <ScrollButton $w={25} aria-label="Le"><Triangle dir="down" /></ScrollButton>
        </VScroll>
      </SheetArea>

      <SheetTabs>
        <TabStrip>
          <NavArrows>
            <button aria-label="Előző lap"><Triangle dir="left" color="#c0c0c0" /></button>
            <button aria-label="Következő lap"><Triangle dir="right" color="#c0c0c0" /></button>
          </NavArrows>
          {SHEETS.map(([name, w]) => (
            <SheetTab key={name} $w={w} $active={name === 'állatkert'}>{name}</SheetTab>
          ))}
          <TabEnd />
          <AddSheet aria-label="Új munkalap">
            <svg width="24" height="24" viewBox="0 0 24 24" fill="none" stroke="#777" strokeWidth="1.4">
              <circle cx="12" cy="12" r="10.5" />
              <path d="M12 7v10M7 12h10" strokeWidth="1.8" />
            </svg>
          </AddSheet>
        </TabStrip>
        <Grip $w={36}><i /><i /><i /></Grip>
        <HScroll>
          <ScrollButton $w={26} aria-label="Balra"><Triangle dir="left" /></ScrollButton>
          <HTrack><HThumb /></HTrack>
          <ScrollButton $w={24} aria-label="Jobbra"><Triangle dir="right" /></ScrollButton>
        </HScroll>
        <ScrollEnd />
      </SheetTabs>

      <StatusBar>
        <StatusText>Kész</StatusText>
        <AccessibilityStatus>
          <AccessibilityIcon />Akadálymentesség: módosítás javasolt
        </AccessibilityStatus>
        <ViewButton $active aria-label="Normál nézet">
          <svg width="20" height="20" viewBox="0 0 20 20" fill="none" stroke={INK} strokeWidth="1.5">
            <path d="M1 1h18v18H1zM7 1v18M13 1v18M1 7h18M1 13h18" />
          </svg>
        </ViewButton>
        <ViewButton aria-label="Lapelrendezés nézet">
          <svg width="22" height="20" viewBox="0 0 22 20" fill="none" stroke={INK} strokeWidth="1.5">
            <path d="M1 1h20v18H1zM5.5 4h11v12h-11zM8 7.5h6M8 10h6M8 12.5h6" />
          </svg>
        </ViewButton>
        <ViewButton aria-label="Oldaltörés megtekintése">
          <svg width="22" height="20" viewBox="0 0 22 20" fill="none" stroke={INK} strokeWidth="1.5">
            <path d="M1 1h20v18H1zM1 12h14V1M8 1v11" />
          </svg>
        </ViewButton>
        <ZoomArea>
          <button aria-label="Kicsinyítés">
            <svg width="12" height="12" viewBox="0 0 12 12" stroke={INK} strokeWidth="1.2"><path d="M0 6h12" /></svg>
          </button>
          <ZoomTrack>
            <ZoomRange type="range" aria-label="Nagyítás" min={0} max={100} defaultValue={42} />
          </ZoomTrack>
          <button aria-label="Nagyítás növelése">
            <svg width="12" height="12" viewBox="0 0 12 12" stroke={INK} strokeWidth="1.2"><path d="M0 6h12M6 0v12" /></svg>
          </button>
        </ZoomArea>
        <ZoomValue>85%</ZoomValue>
      </StatusBar>
    </Window>
  );
}
